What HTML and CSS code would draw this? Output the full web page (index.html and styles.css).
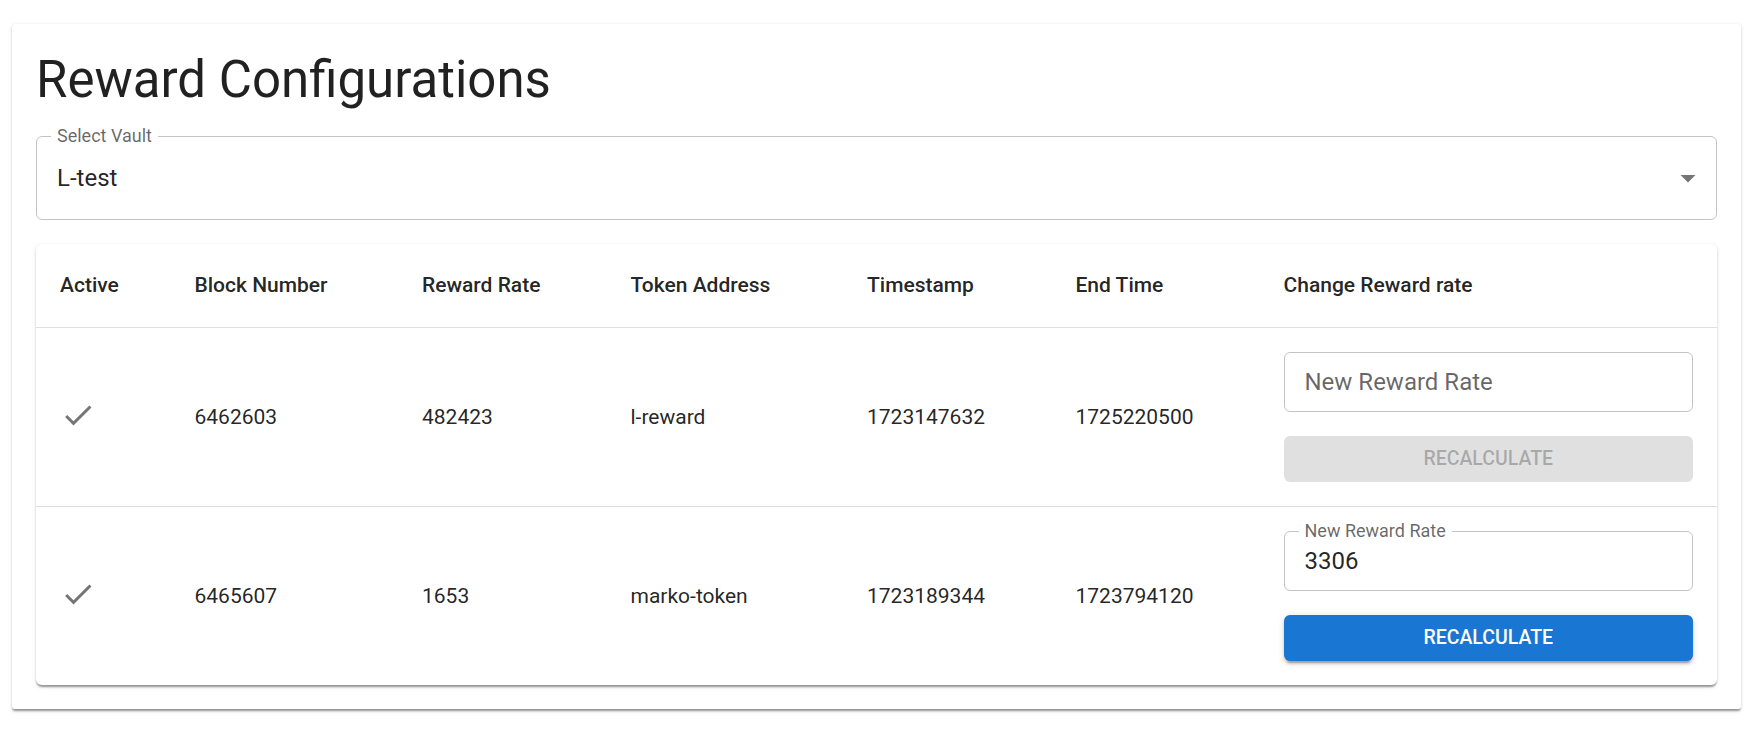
FILE: index.html
```html
<!DOCTYPE html>
<html lang="en">
<head>
<meta charset="utf-8">
<title>Reward Configurations</title>
<link rel="stylesheet" href="styles.css">
</head>
<body>
<div class="page">
  <div class="paper">
    <h1 class="title">Reward Configurations</h1>
    <div class="select">
      <span class="float-label">Select Vault</span>
      <span class="select-value">L-test</span>
      <svg class="arrow" viewBox="0 0 24 24"><path d="M7 10l5 5 5-5z"/></svg>
    </div>
    <div class="table-card">
      <table class="grid">
        <colgroup>
          <col class="c1"><col class="c2"><col class="c3"><col class="c4"><col class="c5"><col class="c6"><col class="c7">
        </colgroup>
        <thead>
          <tr>
            <th>Active</th>
            <th>Block Number</th>
            <th>Reward Rate</th>
            <th>Token Address</th>
            <th>Timestamp</th>
            <th>End Time</th>
            <th>Change Reward rate</th>
          </tr>
        </thead>
        <tbody>
          <tr>
            <td><svg class="check" viewBox="0 0 24 24"><path d="M9 16.17 4.83 12l-1.42 1.41L9 19 21 7l-1.41-1.41z"/></svg></td>
            <td>6462603</td>
            <td>482423</td>
            <td>l-reward</td>
            <td>1723147632</td>
            <td>1725220500</td>
            <td class="action">
              <div class="field"><span class="field-placeholder">New Reward Rate</span></div>
              <button class="btn btn-disabled" type="button">Recalculate</button>
            </td>
          </tr>
          <tr class="last">
            <td><svg class="check" viewBox="0 0 24 24"><path d="M9 16.17 4.83 12l-1.42 1.41L9 19 21 7l-1.41-1.41z"/></svg></td>
            <td>6465607</td>
            <td>1653</td>
            <td>marko-token</td>
            <td>1723189344</td>
            <td>1723794120</td>
            <td class="action">
              <div class="field">
                <span class="field-label">New Reward Rate</span>
                <span class="field-value">3306</span>
              </div>
              <button class="btn btn-primary" type="button">Recalculate</button>
            </td>
          </tr>
        </tbody>
      </table>
    </div>
  </div>
</div>
</body>
</html>
```
FILE: styles.css
```css
* { box-sizing: border-box; }

html, body {
  margin: 0;
  background: #ffffff;
}

body {
  font-family: Roboto, "Liberation Sans", Arial, sans-serif;
  color: rgba(0, 0, 0, 0.87);
}

.page {
  padding: 24px 12px 24px 12px;
}

.paper {
  background: #fff;
  border-radius: 3px;
  padding: 24px;
  box-shadow: 0 3px 2px -1px rgba(0,0,0,0.24), 0 1.5px 1.5px 0 rgba(0,0,0,0.14), 0 1.5px 4.5px 0 rgba(0,0,0,0.12);
}

.title {
  margin: 0 0 25px 0;
  font-size: 51px;
  line-height: 63px;
  font-weight: 400;
  letter-spacing: 0;
}

.select {
  position: relative;
  height: 84px;
  border: 1px solid #c4c4c4;
  border-radius: 6px;
  display: flex;
  align-items: center;
  padding-left: 20px;
  margin-bottom: 24px;
}

.float-label {
  position: absolute;
  left: 14px;
  top: -12px;
  padding: 0 6px;
  background: #fff;
  font-size: 18px;
  line-height: 22px;
  color: rgba(0, 0, 0, 0.6);
}

.select-value {
  font-size: 24px;
  line-height: 34px;
}

.arrow {
  position: absolute;
  right: 10px;
  top: 23px;
  width: 36px;
  height: 36px;
  fill: rgba(0, 0, 0, 0.54);
}

.table-card {
  background: #fff;
  border-radius: 6px;
  overflow: hidden;
  box-shadow: 0 3px 2px -1px rgba(0,0,0,0.24), 0 1.5px 1.5px 0 rgba(0,0,0,0.14), 0 1.5px 4.5px 0 rgba(0,0,0,0.12);
}

.grid {
  width: 100%;
  table-layout: fixed;
  border-collapse: collapse;
}

.c1 { width: 134.5px; }
.c2 { width: 227.5px; }
.c3 { width: 208.5px; }
.c4 { width: 236.5px; }
.c5 { width: 208.5px; }
.c6 { width: 208px; }
.c7 { width: auto; }

.grid th {
  text-align: left;
  font-weight: 500;
  font-size: 21px;
  line-height: 35px;
  padding: 24px;
  border-bottom: 1px solid #e0e0e0;
  color: rgba(0, 0, 0, 0.87);
}

.grid td {
  font-size: 21px;
  line-height: 30px;
  padding: 24px;
  border-bottom: 1px solid #e0e0e0;
  vertical-align: middle;
  color: rgba(0, 0, 0, 0.87);
}

.grid tr.last td {
  border-bottom: 0;
}

.check {
  display: block;
  width: 36px;
  height: 36px;
  margin-top: -4px;
  fill: rgba(0, 0, 0, 0.54);
}

.field {
  position: relative;
  height: 60px;
  border: 1px solid #c4c4c4;
  border-radius: 6px;
  display: flex;
  align-items: center;
  padding-left: 20px;
  margin-bottom: 24px;
}

.field-placeholder {
  font-size: 24px;
  line-height: 34px;
  color: rgba(0, 0, 0, 0.6);
}

.field-label {
  position: absolute;
  left: 14px;
  top: -12px;
  padding: 0 6px;
  background: #fff;
  font-size: 18px;
  line-height: 22px;
  color: rgba(0, 0, 0, 0.6);
}

.field-value {
  font-size: 24px;
  line-height: 34px;
  color: rgba(0, 0, 0, 0.87);
}

.btn {
  display: block;
  width: 100%;
  height: 46px;
  border: 0;
  border-radius: 6px;
  font-family: Roboto, "Liberation Sans", Arial, sans-serif;
  font-size: 19.5px;
  font-weight: 500;
  letter-spacing: 0;
  text-transform: uppercase;
  line-height: 34px;
  padding: 6px 15px;
}

.btn-disabled {
  background: rgba(0, 0, 0, 0.12);
  color: rgba(0, 0, 0, 0.26);
}

.btn-primary {
  background: #1976d2;
  color: #fff;
  box-shadow: 0 4.5px 1.5px -3px rgba(0,0,0,0.2), 0 3px 3px 0 rgba(0,0,0,0.14), 0 1.5px 7.5px 0 rgba(0,0,0,0.12);
}
```
